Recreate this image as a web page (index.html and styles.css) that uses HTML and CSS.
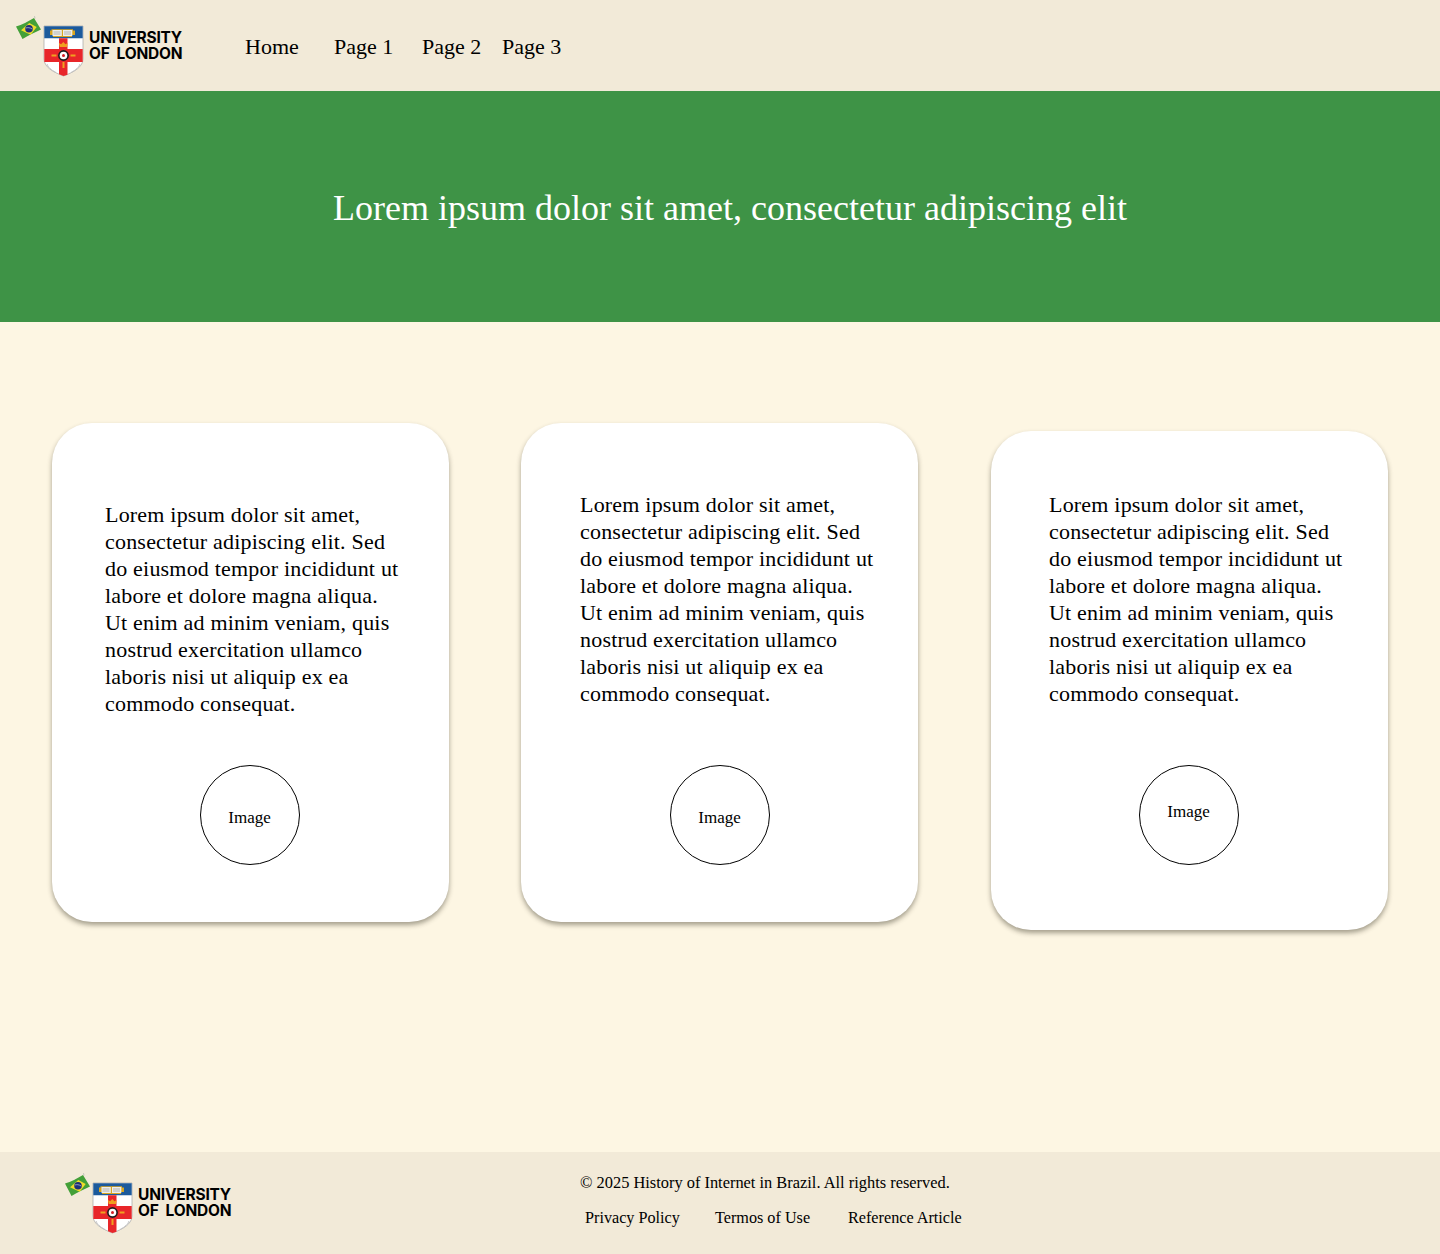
FILE: index.html
```html
<!DOCTYPE html>
<html lang="en">
<head>
<meta charset="utf-8">
<title>History of Internet in Brazil</title>
<link rel="stylesheet" href="styles.css">
</head>
<body>
<svg class="defs" width="0" height="0" aria-hidden="true">
  <symbol id="crest" viewBox="16 16 68 62">
    <path d="M34.500 16.200l.5 2.200" stroke="#b5b5b5" stroke-width=".8" fill="none"/>
    <path d="M16 26.500c6-1.500 12-5 18-8.500l7 11.500c-6 3-13 6-18.500 9.500z" fill="#43a038"/>
    <path d="M21 30.200l8.300-7.200 7.400 4-6 7.700z" fill="#efdc2a"/>
    <circle cx="29" cy="28.700" r="3.800" fill="#1e2f78"/>
    <path d="M25.700 28c2-.6 4.500-.5 6.500 1" stroke="#dfe3e8" stroke-width=".6" fill="none"/>
    <path d="M44 26h39v33c0 8-9 13-19.500 17C53 72 44 67 44 59z" fill="#fff" stroke="#a3a3a3" stroke-width=".7"/>
    <path d="M44.300 26.300h38.400v12H44.300z" fill="#1c5a9c"/>
    <path d="M50 30.500h1.500v-1.300h21.500v1.300h2v4.500h-3v2H53v-2h-3z" fill="#d9a520"/>
    <path d="M52.500 30h9.300v6h-9.300zM63 30h9.300v6H63z" fill="#eeeeea"/>
    <path d="M53.500 32h7M53.500 34h7M64 32h7M64 34h7" stroke="#9a9a9a" stroke-width=".7"/>
    <path d="M44.300 49h38.400v13H44.300z" fill="#e8262a"/>
    <path d="M59 38.300h8.500v36.400l-4 1.300-4.500-1.700z" fill="#e8262a"/>
    <path d="M47 64c1 3 4 6 9 8.500M80 64c-1 3-4 6-9 8.500" stroke="#c4c4c4" stroke-width="1" fill="none"/>
    <path d="M59.700 47l-.8-4 2.200 1.200 2.200-2.200 2.200 2.200 2.200-1.200-.8 4z" fill="#f0a020"/>
    <path d="M51.500 55.500h5M70.500 55.500h5M63.500 62v6" stroke="#f0a020" stroke-width="2"/>
    <circle cx="63.500" cy="55.500" r="5.400" fill="#1d1d1d"/>
    <circle cx="63.500" cy="55.500" r="3.800" fill="#fff"/>
    <circle cx="63.500" cy="55.500" r="1.500" fill="#d32025"/>
  </symbol>
</svg>

<header class="topbar">
  <a class="brand" href="#">
    <svg class="crest" viewBox="0 0 68 62"><use href="#crest"/></svg>
    <span class="wordmark">UNIVERSITY<br>OF LONDON</span>
  </a>
  <nav class="nav">
    <a href="#">Home</a>
    <a href="#">Page 1</a>
    <a href="#">Page 2</a>
    <a href="#">Page 3</a>
  </nav>
</header>

<section class="hero">
  <h1>Lorem ipsum dolor sit amet, consectetur adipiscing elit</h1>
</section>

<main class="content">
  <article class="card card-a">
    <p>Lorem ipsum dolor sit amet, consectetur adipiscing elit. Sed do eiusmod tempor incididunt ut labore et dolore magna aliqua. Ut enim ad minim veniam, quis nostrud exercitation ullamco laboris nisi ut aliquip ex ea commodo consequat.</p>
    <div class="thumb">Image</div>
  </article>
  <article class="card card-b">
    <p>Lorem ipsum dolor sit amet, consectetur adipiscing elit. Sed do eiusmod tempor incididunt ut labore et dolore magna aliqua. Ut enim ad minim veniam, quis nostrud exercitation ullamco laboris nisi ut aliquip ex ea commodo consequat.</p>
    <div class="thumb">Image</div>
  </article>
  <article class="card card-c">
    <p>Lorem ipsum dolor sit amet, consectetur adipiscing elit. Sed do eiusmod tempor incididunt ut labore et dolore magna aliqua. Ut enim ad minim veniam, quis nostrud exercitation ullamco laboris nisi ut aliquip ex ea commodo consequat.</p>
    <div class="thumb">Image</div>
  </article>
</main>

<footer class="footer">
  <a class="brand footer-brand" href="#">
    <svg class="crest" viewBox="0 0 68 62"><use href="#crest"/></svg>
    <span class="wordmark">UNIVERSITY<br>OF LONDON</span>
  </a>
  <div class="footer-info">
    <p class="copy">© 2025 History of Internet in Brazil. All rights reserved.</p>
    <div class="footer-links">
      <a href="#">Privacy Policy</a>
      <a href="#">Termos of Use</a>
      <a href="#">Reference Article</a>
    </div>
  </div>
</footer>
</body>
</html>
```
FILE: styles.css
```css
* { box-sizing: border-box; }
html, body { margin: 0; padding: 0; }
body {
  background: #fdf6e3;
  color: #000;
  font-family: "Liberation Serif", "DejaVu Serif", serif;
}
a { color: inherit; text-decoration: none; }
.defs { position: absolute; }

.topbar {
  display: flex;
  height: 91px;
  background: #f2ead8;
  padding: 16px 0 0 16px;
}
.brand { display: flex; align-items: flex-start; width: 229px; flex: none; }
.crest { width: 68px; height: 62px; display: block; flex: none; }
.wordmark {
  margin: 14px 0 0 5px;
  font-family: "Inter", "Liberation Sans", sans-serif;
  font-weight: 700;
  font-size: 15.500px;
  line-height: 16px;
  letter-spacing: -0.2px;
  word-spacing: 3.500px;
  white-space: nowrap;
}
.nav {
  display: grid;
  grid-template-columns: 89px 88px 80px auto;
  font-size: 22px;
  line-height: 30px;
  padding-top: 16px;
  height: 46px;
}

.hero {
  height: 231px;
  background: #3e9346;
  color: #fff;
  display: flex;
  align-items: center;
  justify-content: center;
  padding: 3px 0 0 20px;
}
.hero h1 {
  margin: 0;
  font-weight: 400;
  font-size: 36px;
  line-height: 44px;
}

.content {
  height: 830px;
  padding: 101px 52px 0;
  display: flex;
  gap: 72px;
  align-items: flex-start;
}
.card {
  width: 397px;
  height: 499px;
  flex: none;
  background: #fff;
  border-radius: 40px;
  box-shadow: 0 3px 5px rgba(40, 35, 20, 0.42);
  display: flex;
  flex-direction: column;
}
.card p {
  margin: 0;
  height: 216px;
  font-size: 22px;
  line-height: 27px;
  letter-spacing: 0.2px;
}
.card-a { padding: 78px 46px 0 53px; }
.card-b { padding: 68px 40px 0 59px; }
.card-c { padding: 60px 41px 0 58px; margin: 8px 0 0 1px; }
.thumb {
  width: 100px;
  height: 100px;
  border: 1px solid #000;
  border-radius: 50%;
  display: flex;
  align-items: center;
  justify-content: center;
  align-self: center;
  font-size: 17px;
  padding-top: 6px;
}
.card-a .thumb { margin: 48px 0 0 -9px; }
.card-b .thumb { margin: 58px 0 0 -19px; }
.card-c .thumb { margin: 58px 0 0 -19px; padding: 0 0 7px; }

.footer {
  height: 102px;
  background: #f2ead8;
  display: flex;
  padding: 21px 0 0 65px;
}
.footer-brand { width: 515px; }
.footer-info { margin-top: -21px; }
.copy {
  margin: 0;
  padding-top: 21px;
  font-size: 16.400px;
  line-height: 20px;
}
.footer-links {
  display: grid;
  grid-template-columns: 130px 133px auto;
  margin: 15px 0 0 5px;
  font-size: 16.200px;
  line-height: 20px;
}
```
